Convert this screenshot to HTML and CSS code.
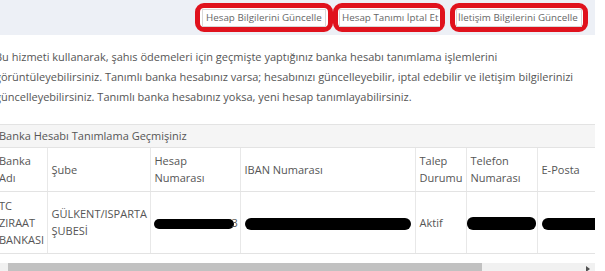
FILE: index.html
```html
<!DOCTYPE html>
<html lang="tr">
<head>
<meta charset="utf-8">
<link rel="stylesheet" href="styles.css">
</head>
<body>
<div class="page">
  <div class="toolbar">
    <a class="btn btn-1"><span class="btn-label">Hesap Bilgilerini Güncelle</span></a>
    <a class="btn btn-2"><span class="btn-label">Hesap Tanımı İptal Et</span></a>
    <a class="btn btn-3"><span class="btn-label">İletişim Bilgilerini Güncelle</span></a>
  </div>
  <p class="intro">Bu hizmeti kullanarak, şahıs ödemeleri için geçmişte yaptığınız banka hesabı tanımlama işlemlerini görüntüleyebilirsiniz. Tanımlı banka hesabınız varsa; hesabınızı güncelleyebilir, iptal edebilir ve iletişim bilgilerinizi güncelleyebilirsiniz. Tanımlı banka hesabınız yoksa, yeni hesap tanımlayabilirsiniz.</p>
  <div class="panel">
    <div class="panel-heading">Banka Hesabı Tanımlama Geçmişiniz</div>
    <div class="table-wrap">
      <table class="grid">
        <colgroup>
          <col class="c-bank"><col class="c-branch"><col class="c-acc"><col class="c-iban"><col class="c-status"><col class="c-phone"><col class="c-mail">
        </colgroup>
        <thead>
          <tr>
            <th>Banka Adı</th>
            <th>Şube</th>
            <th>Hesap Numarası</th>
            <th>IBAN Numarası</th>
            <th>Talep Durumu</th>
            <th>Telefon Numarası</th>
            <th>E-Posta</th>
          </tr>
        </thead>
        <tbody>
          <tr>
            <td>TC ZIRAAT BANKASI</td>
            <td>GÜLKENT/ISPARTA ŞUBESİ</td>
            <td class="acc"><span class="redact r-acc"></span>3</td>
            <td><span class="redact r-iban"></span></td>
            <td>Aktif</td>
            <td class="phone"><span class="redact r-phone"></span></td>
            <td><span class="redact r-mail"></span></td>
          </tr>
        </tbody>
      </table>
    </div>
  </div>
  <div class="hscroll"><div class="hscroll-thumb"></div><span class="hscroll-arrow"></span></div>
</div>
</body>
</html>
```
FILE: styles.css
```css
html, body {
  margin: 0;
  padding: 0;
  background: #fff;
}
body {
  font-family: "Open Sans", "Liberation Sans", sans-serif;
  font-size: 11px;
  color: #555;
  overflow: hidden;
}
.page {
  margin-left: -5px;
  width: 600px;
}
.toolbar {
  height: 35px;
  background: #edf0f6;
  display: flex;
  align-items: center;
  justify-content: flex-end;
  padding-right: 7px;
}
.btn {
  box-sizing: border-box;
  flex-shrink: 0;
  display: flex;
  align-items: center;
  height: 29px;
  border: 5px solid #e0121d;
  border-radius: 9px;
  padding: 0 2px;
  background: #fff;
}
.btn-1 { width: 138px; }
.btn-2 { width: 112px; padding: 0 0 0 1px; }
.btn-3 { width: 138px; margin-left: 5px; padding: 0 1px; }
.btn-label {
  display: block;
  flex: 1;
  white-space: nowrap;
  overflow: hidden;
  background: #fff;
  border: 1px solid #d8d8d8;
  padding: 1px 3px;
  line-height: 14px;
  font-size: 9.8px;
  color: #666;
}
.btn-2 .btn-label { padding: 1px 0 1px 2px; border-right: none; }
.btn-3 .btn-label { padding: 1px 1px; }
.intro {
  margin: 12px 0 17px;
  line-height: 20px;
  padding-right: 10px;
}
.panel {
  border-top: 1px solid #e3e3e3;
}
.panel-heading {
  background: #f5f5f5;
  height: 22px;
  line-height: 22px;
  padding-left: 4px;
  border-bottom: 1px solid #e3e3e3;
}
.table-wrap {
  overflow: hidden;
  width: 600px;
}
.grid {
  table-layout: fixed;
  border-collapse: collapse;
  width: 720px;
}
.c-bank { width: 52px; }
.c-branch { width: 103px; }
.c-acc { width: 90px; }
.c-iban { width: 175px; }
.c-status { width: 51px; }
.c-phone { width: 71px; }
.c-mail { width: 178px; }
.grid th, .grid td {
  text-align: left;
  font-weight: normal;
  vertical-align: middle;
  padding: 4px 4px;
  line-height: 17px;
  border-left: 1px solid #e8e8e8;
  border-bottom: 1px solid #e3e3e3;
}
.grid th:first-child, .grid td:first-child {
  border-left: none;
}
.grid thead tr { height: 43px; }
.grid tbody tr { height: 62px; }
.grid td.acc { white-space: nowrap; padding-left: 3px; }
.grid td.phone { padding-left: 0; }
.redact {
  display: inline-block;
  vertical-align: middle;
  background: #000;
  border-radius: 6px;
}
.r-acc { width: 80px; height: 10px; margin-right: -2px; }
.r-iban { width: 166px; height: 12px; }
.r-phone { width: 69px; height: 13px; }
.r-mail { width: 80px; height: 12px; }
.hscroll {
  position: relative;
  margin-top: 9px;
  margin-left: 5px;
  height: 11px;
  width: 595px;
  background: #f1f1f1;
}
.hscroll-thumb {
  position: absolute;
  left: 8px;
  top: 0;
  width: 474px;
  height: 11px;
  background: #c1c1c1;
}
.hscroll-arrow {
  position: absolute;
  right: 5px;
  top: 3px;
  width: 0;
  height: 0;
  border-top: 3px solid transparent;
  border-bottom: 3px solid transparent;
  border-left: 4px solid #505050;
}
```
